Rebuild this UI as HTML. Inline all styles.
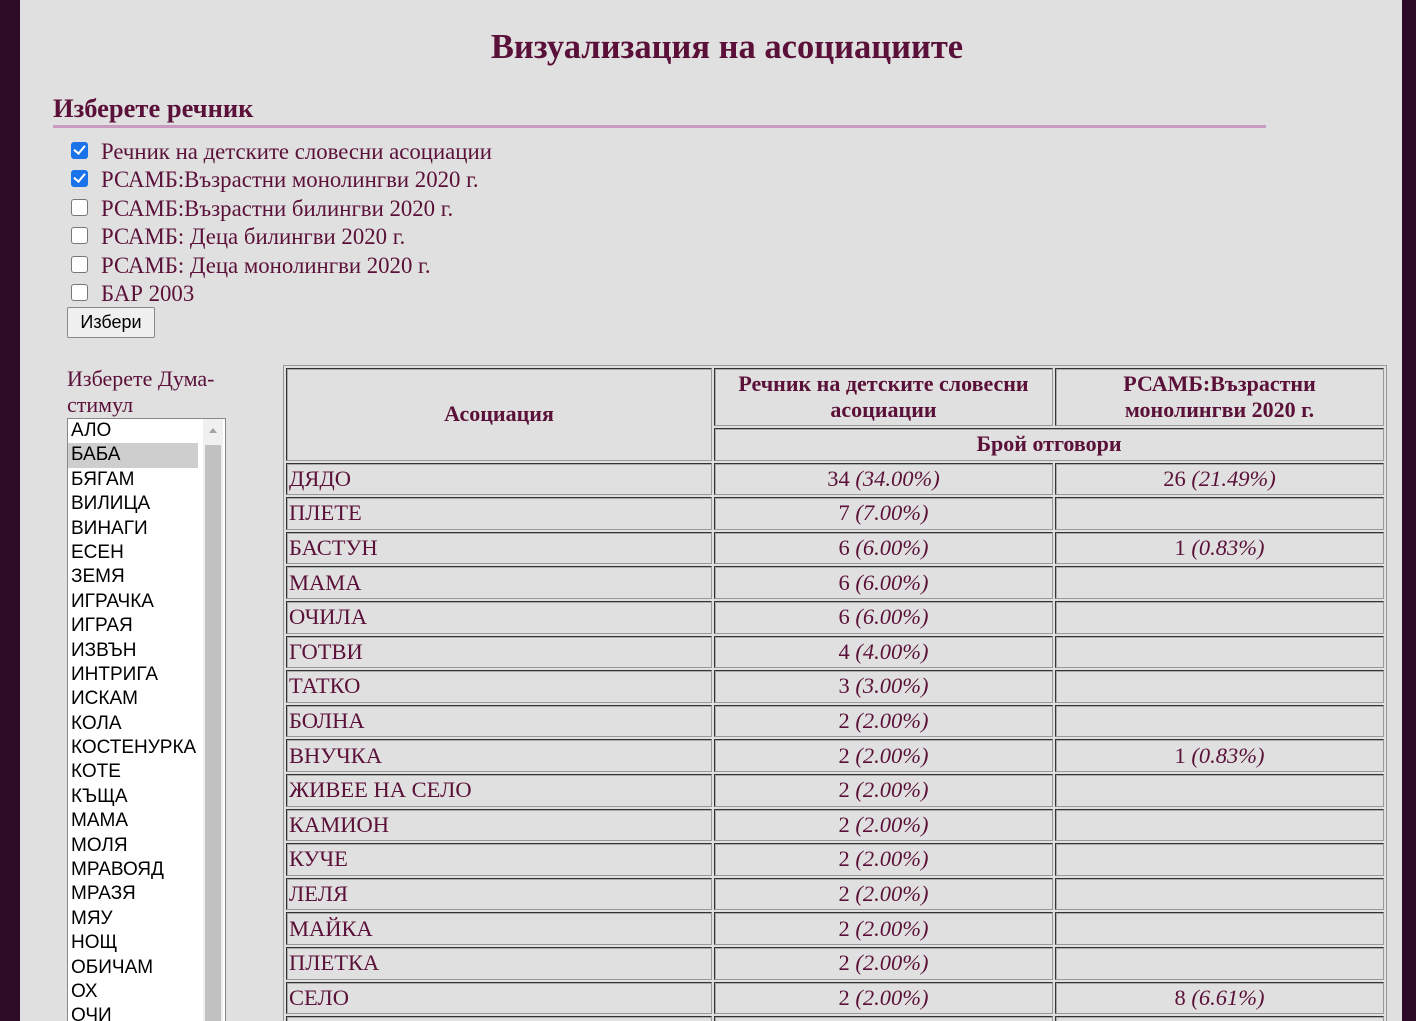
<!DOCTYPE html>
<html style="overflow:hidden;height:1021px"><head><meta charset="utf-8"><style>
body{margin:0;background:#2e0b26;width:1416px;height:1021px;overflow:hidden;font-family:"Liberation Serif",serif;color:#5a1038;position:relative}
.page{position:absolute;left:20px;top:0;width:1382px;height:1021px;background:#e0e0e0;overflow:hidden}
h1{position:absolute;left:0;width:1416px;top:28px;margin:0;text-align:center;font-size:34.5px;font-weight:bold;margin-left:-1px}
h2{position:absolute;left:33px;top:93px;margin:0;font-size:26.5px;font-weight:bold;width:1213px;border-bottom:3px solid #c99bc0;padding-bottom:1px}
.cb{position:absolute;left:51px;font-size:22.8px;white-space:nowrap}
.cb i{display:inline-block;width:15px;height:15px;border:1.5px solid #777;border-radius:3px;background:#fff;margin-right:13px;vertical-align:0px}
.cb i.on{background:#1a73e8;border-color:#1a73e8;position:relative}
.cb i.on:after{content:"";position:absolute;left:4px;top:0px;width:5px;height:9px;border:solid #fff;border-width:0 2.5px 2.5px 0;transform:rotate(40deg)}
.btn{position:absolute;left:47px;top:307px;width:86px;height:29px;border:1px solid #888;border-radius:2px;background:#f0f0f0;font-family:"Liberation Sans",sans-serif;font-size:18px;color:#000;text-align:center;line-height:28px}
.lbl{position:absolute;left:47px;top:366px;font-size:22px;line-height:26px;width:170px}
.list{position:absolute;left:47px;top:418px;width:157px;height:620px;border:1px solid #888;background:#fff;font-family:"Liberation Sans",sans-serif;font-size:19px;color:#000;overflow:hidden}
.list div{height:24.4px;line-height:24.4px;padding-left:3px;width:127px}
.list .sel{background:#cecece}
.sb{position:absolute;right:2px;top:0;width:20px;height:100%;background:#f0f0f0}
.sb b{position:absolute;left:2px;right:2px;top:26px;bottom:0;background:#c1c1c1}
.sb:before{content:"";position:absolute;left:6px;top:9px;border:4px solid transparent;border-bottom:5px solid #a3a3a3;border-top:0}
table{position:absolute;left:263px;top:365px;border:1px solid #999;border-spacing:2px;font-size:22.5px}
td,th{border:1px solid;border-color:#333 #999 #999 #333;box-shadow:inset 1px 1px 0 #aaa;padding:0 2px;height:30.6px;line-height:24px}
th{font-weight:bold;text-align:center;line-height:26px;font-size:22px}
td.c{text-align:center}
td em{font-style:italic}
</style></head><body>
<div class="page">
<h1>Визуализация на асоциациите</h1>
<h2>Изберете речник</h2>
<div class="cb" style="top:139px"><i class="on"></i>Речник на детските словесни асоциации</div>
<div class="cb" style="top:167px"><i class="on"></i>РСАМБ:Възрастни монолингви 2020 г.</div>
<div class="cb" style="top:196px"><i></i>РСАМБ:Възрастни билингви 2020 г.</div>
<div class="cb" style="top:224px"><i></i>РСАМБ: Деца билингви 2020 г.</div>
<div class="cb" style="top:253px"><i></i>РСАМБ: Деца монолингви 2020 г.</div>
<div class="cb" style="top:281px"><i></i>БАР 2003</div>
<div class="btn">Избери</div>
<div class="lbl">Изберете Дума-<br>стимул</div>
<div class="list"><div>АЛО</div><div class="sel">БАБА</div><div>БЯГАМ</div><div>ВИЛИЦА</div><div>ВИНАГИ</div><div>ЕСЕН</div><div>ЗЕМЯ</div><div>ИГРАЧКА</div><div>ИГРАЯ</div><div>ИЗВЪН</div><div>ИНТРИГА</div><div>ИСКАМ</div><div>КОЛА</div><div>КОСТЕНУРКА</div><div>КОТЕ</div><div>КЪЩА</div><div>МАМА</div><div>МОЛЯ</div><div>МРАВОЯД</div><div>МРАЗЯ</div><div>МЯУ</div><div>НОЩ</div><div>ОБИЧАМ</div><div>ОХ</div><div>ОЧИ</div><span class="sb"><b></b></span></div>
<table>
<tr><th rowspan="2" style="width:420px">Асоциация</th><th style="width:333px;height:56px">Речник на детските словесни асоциации</th><th style="width:323px">РСАМБ:Възрастни<br>монолингви 2020 г.</th></tr>
<tr><th colspan="2">Брой отговори</th></tr>
<tr><td>ДЯДО</td><td class="c">34 <em>(34.00%)</em></td><td class="c">26 <em>(21.49%)</em></td></tr>
<tr><td>ПЛЕТЕ</td><td class="c">7 <em>(7.00%)</em></td><td></td></tr>
<tr><td>БАСТУН</td><td class="c">6 <em>(6.00%)</em></td><td class="c">1 <em>(0.83%)</em></td></tr>
<tr><td>МАМА</td><td class="c">6 <em>(6.00%)</em></td><td></td></tr>
<tr><td>ОЧИЛА</td><td class="c">6 <em>(6.00%)</em></td><td></td></tr>
<tr><td>ГОТВИ</td><td class="c">4 <em>(4.00%)</em></td><td></td></tr>
<tr><td>ТАТКО</td><td class="c">3 <em>(3.00%)</em></td><td></td></tr>
<tr><td>БОЛНА</td><td class="c">2 <em>(2.00%)</em></td><td></td></tr>
<tr><td>ВНУЧКА</td><td class="c">2 <em>(2.00%)</em></td><td class="c">1 <em>(0.83%)</em></td></tr>
<tr><td>ЖИВЕЕ НА СЕЛО</td><td class="c">2 <em>(2.00%)</em></td><td></td></tr>
<tr><td>КАМИОН</td><td class="c">2 <em>(2.00%)</em></td><td></td></tr>
<tr><td>КУЧЕ</td><td class="c">2 <em>(2.00%)</em></td><td></td></tr>
<tr><td>ЛЕЛЯ</td><td class="c">2 <em>(2.00%)</em></td><td></td></tr>
<tr><td>МАЙКА</td><td class="c">2 <em>(2.00%)</em></td><td></td></tr>
<tr><td>ПЛЕТКА</td><td class="c">2 <em>(2.00%)</em></td><td></td></tr>
<tr><td>СЕЛО</td><td class="c">2 <em>(2.00%)</em></td><td class="c">8 <em>(6.61%)</em></td></tr>
<tr><td>&nbsp;</td><td></td><td></td></tr>
</table>
</div>
</body></html>
